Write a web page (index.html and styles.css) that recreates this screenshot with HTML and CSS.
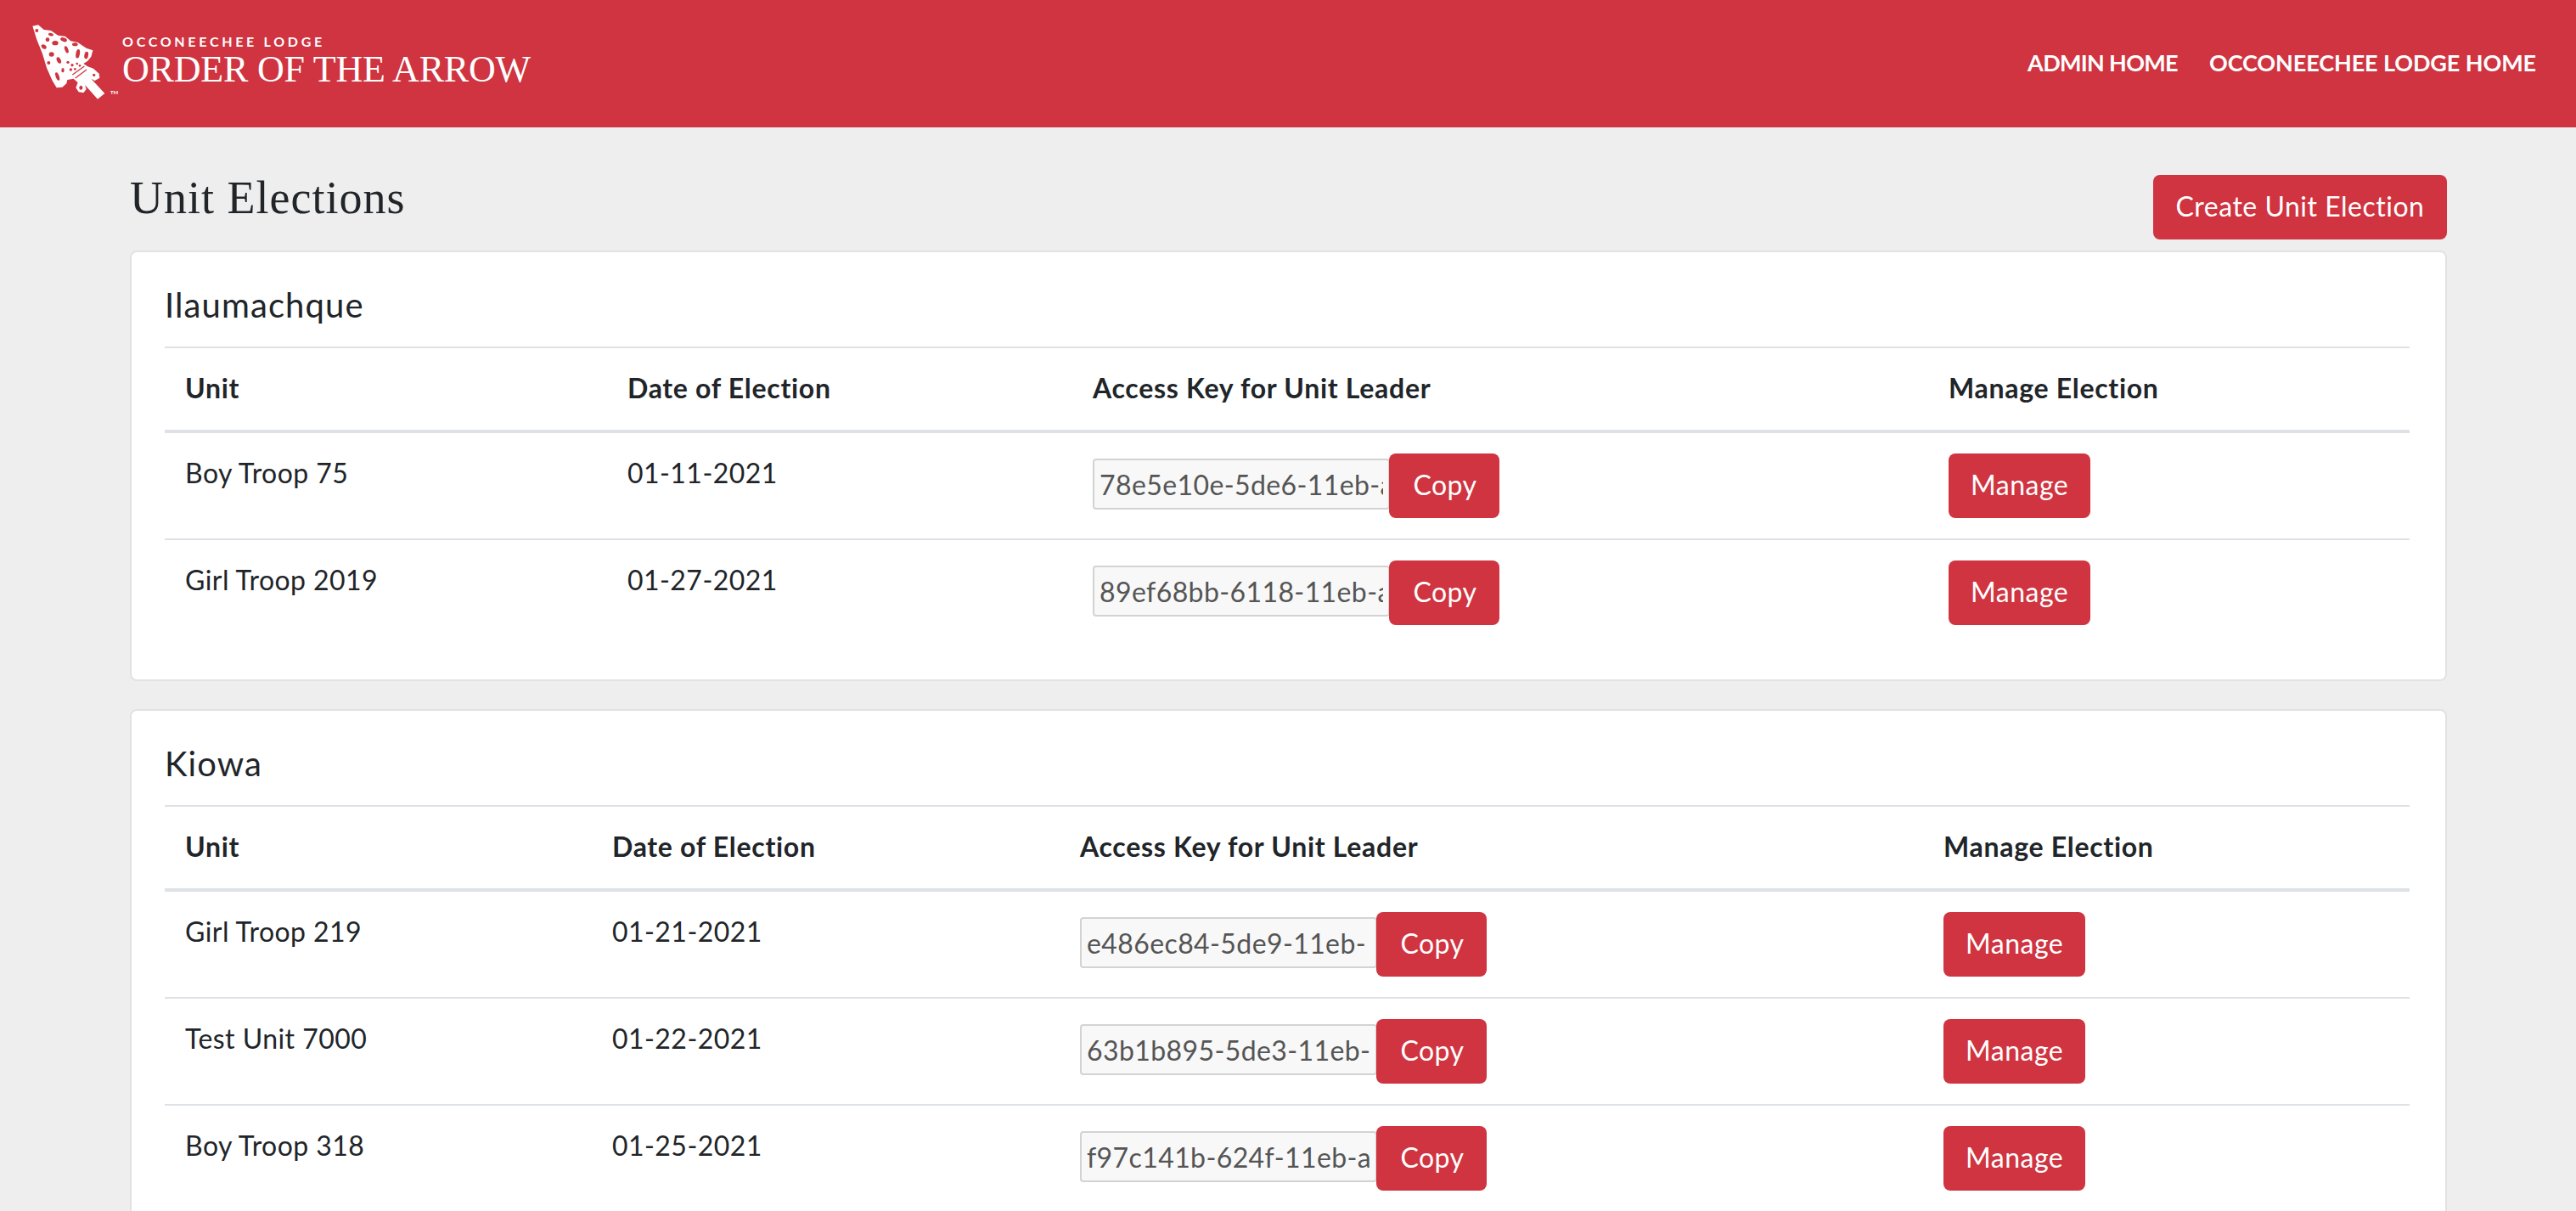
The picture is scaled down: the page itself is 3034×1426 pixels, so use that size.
FILE: index.html
```html
<!DOCTYPE html>
<html lang="en">
<head>
<meta charset="utf-8">
<title>Unit Elections</title>
<link rel="stylesheet" href="styles.css">
</head>
<body>
<header class="site-header">
  <a class="brand">
    <svg class="brand-mark" viewBox="0 0 330 300" aria-hidden="true">
      <path class="mark-fill" d="M55 32 L75 28 L95 45 L120 48 L145 65 L170 68 L190 85 L215 90 L245 110 L268 118 L262 140 L250 155 L235 165 L250 175 L270 182 L290 200 L292 215 L275 225 L262 218 L310 270 L285 290 L240 240 L245 255 L235 268 L218 265 L208 250 L215 232 L200 218 L178 222 L175 235 L160 248 L140 250 L125 225 L105 180 L90 130 L70 80 Z"/>
      <g class="mark-hole">
        <circle cx="70" cy="48" r="6"/>
        <ellipse cx="120" cy="62" rx="9" ry="5" transform="rotate(15 120 62)"/>
        <circle cx="108" cy="80" r="7"/>
        <ellipse cx="135" cy="92" rx="11" ry="8"/>
        <ellipse cx="165" cy="80" rx="12" ry="7" transform="rotate(20 165 80)"/>
        <ellipse cx="205" cy="97" rx="10" ry="6"/>
        <ellipse cx="95" cy="105" rx="10" ry="7" transform="rotate(35 95 105)"/>
        <ellipse cx="175" cy="115" rx="6" ry="13" transform="rotate(-20 175 115)"/>
        <ellipse cx="122" cy="132" rx="9" ry="8"/>
        <circle cx="112" cy="162" r="6"/>
        <ellipse cx="148" cy="153" rx="7" ry="12" transform="rotate(-25 148 153)"/>
        <ellipse cx="215" cy="130" rx="7" ry="16" transform="rotate(10 215 130)"/>
        <ellipse cx="245" cy="135" rx="7" ry="13" transform="rotate(10 245 135)"/>
        <circle cx="180" cy="160" r="5"/>
        <ellipse cx="162" cy="188" rx="5" ry="8"/>
        <ellipse cx="143" cy="210" rx="6" ry="15" transform="rotate(-20 143 210)"/>
        <circle cx="195" cy="170" r="5"/>
        <circle cx="212" cy="165" r="4"/>
        <circle cx="190" cy="186" r="5"/>
        <circle cx="205" cy="184" r="4"/>
        <circle cx="222" cy="172" r="4"/>
        <circle cx="272" cy="205" r="5"/>
        <ellipse cx="226" cy="250" rx="6" ry="8"/>
      </g>
      <path class="mark-band" d="M196 204 L238 174 M206 216 L246 186"/>
    </svg>
    <span class="brand-tm">TM</span>
    <span class="brand-text">
      <span class="brand-lodge">OCCONEECHEE LODGE</span>
      <span class="brand-name">ORDER OF THE ARROW</span>
    </span>
  </a>
  <nav class="site-nav">
    <a>ADMIN HOME</a>
    <a>OCCONEECHEE LODGE HOME</a>
  </nav>
</header>

<main class="content">
  <div class="page-head">
    <h1 class="page-title">Unit Elections</h1>
    <a class="btn btn-create">Create Unit Election</a>
  </div>

  <section class="card">
    <h2 class="card-title">Ilaumachque</h2>
    <hr class="card-rule">
    <table class="elections">
      <colgroup><col class="a1"><col class="a2"><col class="a3"><col></colgroup>
      <thead><tr><th>Unit</th><th>Date of Election</th><th>Access Key for Unit Leader</th><th>Manage Election</th></tr></thead>
      <tbody>
        <tr><td>Boy Troop 75</td><td>01-11-2021</td><td><div class="key"><input class="key-input" readonly value="78e5e10e-5de6-11eb-a"><a class="btn">Copy</a></div></td><td><a class="btn">Manage</a></td></tr>
        <tr><td>Girl Troop 2019</td><td>01-27-2021</td><td><div class="key"><input class="key-input" readonly value="89ef68bb-6118-11eb-a"><a class="btn">Copy</a></div></td><td><a class="btn">Manage</a></td></tr>
      </tbody>
    </table>
  </section>

  <section class="card">
    <h2 class="card-title">Kiowa</h2>
    <hr class="card-rule">
    <table class="elections">
      <colgroup><col class="b1"><col class="b2"><col class="b3"><col></colgroup>
      <thead><tr><th>Unit</th><th>Date of Election</th><th>Access Key for Unit Leader</th><th>Manage Election</th></tr></thead>
      <tbody>
        <tr><td>Girl Troop 219</td><td>01-21-2021</td><td><div class="key"><input class="key-input" readonly value="e486ec84-5de9-11eb-"><a class="btn">Copy</a></div></td><td><a class="btn">Manage</a></td></tr>
        <tr><td>Test Unit 7000</td><td>01-22-2021</td><td><div class="key"><input class="key-input" readonly value="63b1b895-5de3-11eb-a"><a class="btn">Copy</a></div></td><td><a class="btn">Manage</a></td></tr>
        <tr><td>Boy Troop 318</td><td>01-25-2021</td><td><div class="key"><input class="key-input" readonly value="f97c141b-624f-11eb-ac"><a class="btn">Copy</a></div></td><td><a class="btn">Manage</a></td></tr>
      </tbody>
    </table>
  </section>
</main>
</body>
</html>
```
FILE: styles.css
```css
* { box-sizing: border-box; }
html { height: 1426px; overflow: hidden; }
body {
  margin: 0;
  height: 1426px;
  overflow: hidden;
  background: #eeeeee;
  color: #212529;
  font-family: "Lato", "Liberation Sans", sans-serif;
  font-size: 32px;
  letter-spacing: 0.45px;
}
.site-header {
  height: 150px;
  background: #cf3440;
  display: flex;
  align-items: center;
  justify-content: space-between;
  padding: 0 47px 0 20px;
}
.brand {
  display: flex;
  align-items: flex-start;
  position: relative;
  color: #fff;
  height: 150px;
  letter-spacing: 0;
}
.brand-mark { width: 110px; height: 100px; margin-top: 20px; flex: none; }
.mark-fill { fill: #fff; }
.mark-hole { fill: #cf3440; }
.mark-band { fill: none; stroke: #cf3440; stroke-width: 4; }
.brand-tm { position: absolute; left: 110px; top: 105px; font-size: 6px; font-weight: 700; }
.brand-text { display: flex; flex-direction: column; margin: 39px 0 0 14px; }
.brand-lodge { font-size: 16px; font-weight: 700; letter-spacing: 3.7px; line-height: 20px; }
.brand-name {
  font-family: "Liberation Serif", serif;
  font-size: 44px;
  line-height: 50px;
  letter-spacing: -0.2px;
  margin-top: -2px;
}
.site-nav { display: flex; gap: 37px; margin-top: -4px; }
.site-nav a { color: #fff; font-size: 27px; font-weight: 700; letter-spacing: -0.1px; }
.site-nav a:first-child { letter-spacing: -0.7px; }
.content { padding: 56px 152px 0 153px; }
.page-head {
  display: flex;
  justify-content: space-between;
  align-items: flex-start;
  margin-bottom: 13px;
}
.page-title {
  margin: 0;
  font-family: "Liberation Serif", serif;
  font-weight: 400;
  font-size: 54px;
  line-height: 54px;
  letter-spacing: 1px;
  color: #212529;
}
.btn {
  display: inline-block;
  background: #cf3440;
  color: #fff;
  font-size: 32px;
  line-height: 48px;
  padding: 13px 26px 15px;
  border-radius: 8px;
  letter-spacing: 0.5px;
  white-space: nowrap;
}
.btn-create { width: 346px; text-align: center; padding: 13px 0 15px; }
.card {
  background: #fff;
  border: 2px solid #e2e2e2;
  border-radius: 8px;
  padding: 32px 42px 40px 39px;
  margin-bottom: 33px;
}
.card-title { margin: 0; font-weight: 400; font-size: 40px; line-height: 60px; letter-spacing: 1.1px; color: #212529; }
.card-rule { border: 0; border-top: 2px solid #dee2e6; margin: 19px 0 0; }
.elections { width: 100%; table-layout: fixed; border-collapse: collapse; }
.a1 { width: 521px; } .a2 { width: 548px; } .a3 { width: 1008px; }
.b1 { width: 503px; } .b2 { width: 551px; } .b3 { width: 1017px; }
.elections th {
  text-align: left;
  font-weight: 700;
  padding: 24px 24px 26px;
  line-height: 46px;
  letter-spacing: 0.7px;
  border-bottom: 4px solid #dee2e6;
}
.elections td {
  padding: 24px;
  line-height: 46px;
  vertical-align: top;
  border-bottom: 2px solid #dee2e6;
}
.elections tr:last-child td { border-bottom: 0; }
.elections td > .btn { display: block; width: fit-content; }
.key { display: flex; align-items: center; }
.key-input {
  width: 350px;
  height: 60px;
  margin-bottom: 4px;
  padding: 2px 6px;
  border: 2px solid #d3d3d3;
  border-radius: 4px;
  background: #f8f8f8;
  color: #555;
  font-family: "Lato", sans-serif;
  font-size: 32px;
  letter-spacing: 0.4px;
  outline: 0;
}
.key .btn { flex: none; width: 130px; margin-left: -1px; padding: 13px 0 15px 2px; text-align: center; }
```
